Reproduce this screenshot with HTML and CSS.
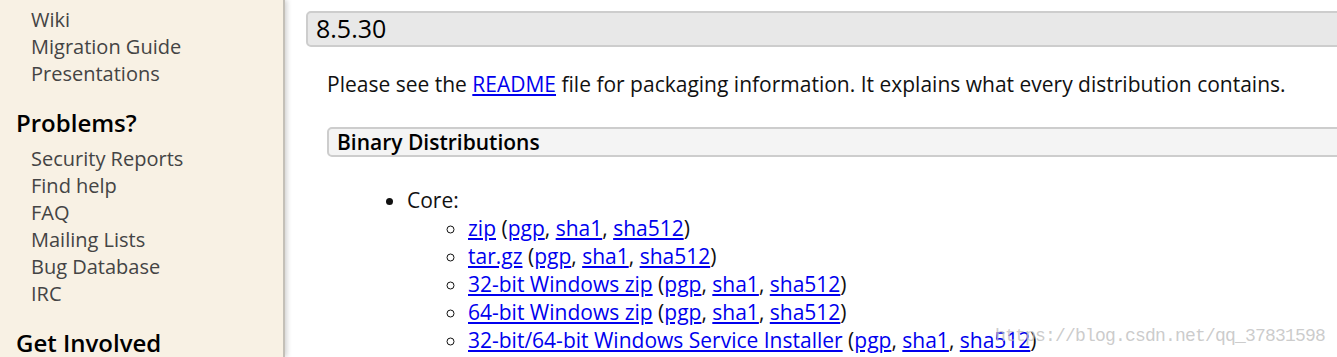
FILE: index.html
```html
<!DOCTYPE html>
<html lang="en">
<head>
    <meta charset="UTF-8">
    <title>Apache Tomcat 8 Downloads</title>
    <link rel="stylesheet" href="styles.css">
</head>
<body>
    <div class="page">
        <nav class="sidebar">
            <ul class="nav-list">
                <li><a href="#">Wiki</a></li>
                <li><a href="#">Migration Guide</a></li>
                <li><a href="#">Presentations</a></li>
            </ul>
            <h2>Problems?</h2>
            <ul class="nav-list">
                <li><a href="#">Security Reports</a></li>
                <li><a href="#">Find help</a></li>
                <li><a href="#">FAQ</a></li>
                <li><a href="#">Mailing Lists</a></li>
                <li><a href="#">Bug Database</a></li>
                <li><a href="#">IRC</a></li>
            </ul>
            <h2>Get Involved</h2>
        </nav>

        <main class="content">
            <h3 class="version">8.5.30</h3>
            <div class="section">
                <p>Please see the <a href="#">README</a> file for packaging information. It explains what every distribution contains.</p>
                <h4 class="subsection">Binary Distributions</h4>
                <ul class="dist-list">
                    <li>Core:
                        <ul>
                            <li><a href="#">zip</a> (<a href="#">pgp</a>, <a href="#">sha1</a>, <a href="#">sha512</a>)</li>
                            <li><a href="#">tar.gz</a> (<a href="#">pgp</a>, <a href="#">sha1</a>, <a href="#">sha512</a>)</li>
                            <li><a href="#">32-bit Windows zip</a> (<a href="#">pgp</a>, <a href="#">sha1</a>, <a href="#">sha512</a>)</li>
                            <li><a href="#">64-bit Windows zip</a> (<a href="#">pgp</a>, <a href="#">sha1</a>, <a href="#">sha512</a>)</li>
                            <li><a href="#">32-bit/64-bit Windows Service Installer</a> (<a href="#">pgp</a>, <a href="#">sha1</a>, <a href="#">sha512</a>)</li>
                        </ul>
                    </li>
                </ul>
            </div>
        </main>
    </div>

    <div class="watermark">https://blog.csdn.net/qq_37831598</div>
</body>
</html>
```

FILE: styles.css
```css
* {
    margin: 0;
    padding: 0;
    box-sizing: border-box;
}

html, body {
    overflow: hidden;
    height: 357px;
}

body {
    font-family: 'Open Sans', 'Noto Sans', sans-serif;
    font-size: 20px;
    color: #111;
    background: #fff;
    position: relative;
}

a {
    color: #0000ee;
}

.page {
    display: flex;
    width: 1500px;
    height: 357px;
}

/* left navigation */
.sidebar {
    flex: none;
    width: 285px;
    background: #f8f1e4;
    border-right: 2px solid #c4c0b8;
    box-shadow: 2px 0 5px rgba(0, 0, 0, 0.18);
    padding: 6px 0 0 16px;
}

.sidebar h2 {
    font-size: 24px;
    font-weight: 600;
    line-height: 32px;
    color: #000;
    margin: 20px 0 6px;
}

.nav-list {
    list-style: none;
    padding-left: 15px;
}

.nav-list li {
    line-height: 27px;
}

.nav-list a {
    color: #444;
    text-decoration: none;
}

/* main column */
.content {
    flex: none;
    width: 1200px;
    padding: 11px 0 0 21px;
    font-size: 21px;
}

.version {
    font-size: 25px;
    font-weight: 400;
    line-height: 31px;
    padding: 0 0 1px 8px;
    background: #e8e8e8;
    border: 2px solid #cdcdcd;
    border-radius: 5px;
    color: #000;
}

.section {
    padding-left: 21px;
}

.section p {
    line-height: 27px;
    margin-top: 24px;
}

.subsection {
    font-size: 21px;
    font-weight: 600;
    line-height: 26px;
    padding-left: 8px;
    background: #f4f4f4;
    border: 2px solid #cdcdcd;
    border-radius: 5px;
    margin-top: 29px;
    color: #000;
}

.dist-list {
    padding-left: 80px;
    margin-top: 29px;
}

.dist-list li {
    line-height: 28px;
}

.dist-list ul {
    list-style: circle;
    padding-left: 61px;
}

.watermark {
    position: absolute;
    left: 995px;
    top: 324px;
    font-family: 'Liberation Mono', monospace;
    font-size: 18px;
    letter-spacing: -0.8px;
    color: rgba(190, 190, 190, 0.8);
    line-height: 24px;
}
```
